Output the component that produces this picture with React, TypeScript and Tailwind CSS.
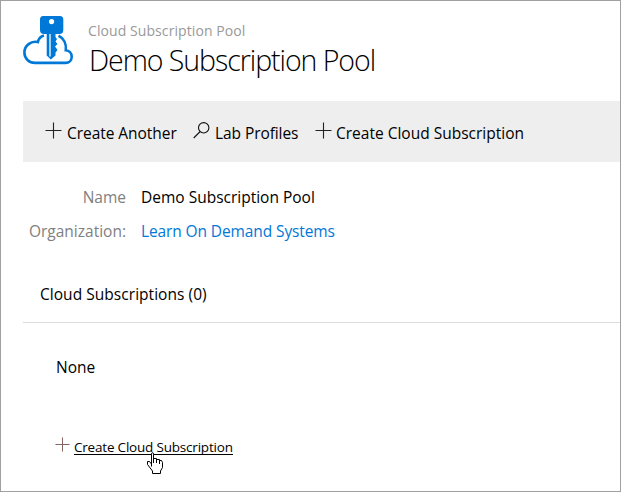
function Plus({ className }: { className: string }) {
  return (
    <svg className={className} viewBox="0 0 17 17" fill="none" stroke="currentColor" strokeWidth="1.100">
      <path d="M0.5 8.5H16.5M8.5 0.5V16.5" />
    </svg>
  );
}

function Logo() {
  return (
    <svg className="block h-[52px] w-[52px] shrink-0" viewBox="0 0 52 52" fill="none">
      <path
        d="M21 19.500C17.800 20.300 15.600 22.800 14.800 26.100C8 24.600 1.400 29.500 1.400 36.500C1.400 42.500 6 46.900 12 46.900H42.500C46.300 46.900 48.700 44 48.700 40.700C48.700 37 46 34.500 42.800 34.300C43.600 27.500 40.500 22 35.500 19.700"
        stroke="#0078d7"
        strokeWidth="2.600"
      />
      <path
        fillRule="evenodd"
        fill="#0078d7"
        d="M20 0H37Q40.300 0 40.300 3.500V14Q40.300 18 36.500 18H21Q17 18 17 14V3.500Q17 0 20 0ZM28.600 3A2.600 2.600 0 1 0 28.600 8.200A2.600 2.600 0 1 0 28.600 3Z"
      />
      <path d="M23.700 17H32.500V21L34 23L32.500 25.500L34.500 28L32 30.500L34.500 34L32.500 36.500V39.500L27.800 43.500L23.700 39.500Z" fill="#0078d7" />
      <path d="M27 18V40.500" stroke="white" strokeWidth="1.300" />
    </svg>
  );
}

function Hand() {
  return (
    <svg className="absolute left-[72px] top-[15px] h-[23px] w-[18px]" viewBox="0 0 18 23">
      <path
        d="M5.500 14.500V2.500Q5.500 0.500 6.500 0.500Q7.500 0.500 7.500 2.500V6.500H10.500V7.500H13.500V8.500H15.500L16.500 10.500V15.500L14.500 19V21.500H6.500V19L1.500 12.500V9.500H3.500L5.500 12"
        fill="white"
        stroke="black"
      />
      <path d="M7.500 6V11M10.500 7V11M13.500 8V12" stroke="black" />
    </svg>
  );
}

export default function App() {
  return (
    <div className="h-[492px] w-[621px] overflow-hidden border border-[#a0a0a0] bg-white font-['Open_Sans','Noto_Sans',sans-serif] text-[15.5px] leading-[22px] whitespace-nowrap text-black">
      <header className="flex h-[100px] pl-[22px] pt-[15px]">
        <Logo />
        <div className="ml-[13px]">
          <p className="h-[20px] text-[14px] leading-[29px] tracking-[0.08px] text-[#999]">Cloud Subscription Pool</p>
          <h1 className="ml-px mt-[3px] text-[28.5px] leading-[42px] font-light tracking-[-1.050px]">Demo Subscription Pool</h1>
        </div>
      </header>
      <nav className="ml-[22px] flex h-[61px] items-center bg-[#eee] pl-[22px] pt-[3px]">
        <div className="flex w-[148px]">
          <Plus className="mr-[4px] h-[17px] w-[17px] shrink-0 text-[#222]" />
          <span className="ml-px tracking-[-0.050px]">Create Another</span>
        </div>
        <div className="flex w-[122px]">
          <svg className="mr-[4px] h-[17px] w-[17px] shrink-0" viewBox="0 0 17 17" fill="none" stroke="#111" strokeWidth="1.100">
            <circle cx="10.700" cy="5.800" r="5.200" />
            <path d="M7.200 9.500L0.700 16" />
          </svg>
          <span className="ml-px tracking-[-0.080px]">Lab Profiles</span>
        </div>
        <div className="flex">
          <Plus className="mr-[4px] h-[17px] w-[17px] shrink-0 text-[#222]" />
          <span>Create Cloud Subscription</span>
        </div>
      </nav>
      <dl className="grid h-[110px] grid-cols-[125px_1fr] grid-rows-[34px_34px] gap-x-[15px] pt-[24px]">
        <dt className="text-right text-[#808080]">Name</dt>
        <dd>Demo Subscription Pool</dd>
        <dt className="text-right text-[#808080]">Organization:</dt>
        <dd className="tracking-[-0.110px] text-[#0078d7]">Learn On Demand Systems</dd>
      </dl>
      <h2 className="ml-[22px] h-[51px] border-b border-[#dcdcdc] pl-[17px] pt-[11px] tracking-[0.040px]">Cloud Subscriptions (0)</h2>
      <p className="ml-[55px] mt-[33px]">None</p>
      <div className="relative ml-[54px] mt-[59px] flex text-[13.500px] leading-[20px] tracking-[-0.200px]">
        <Plus className="mr-[4px] h-[15px] w-[15px] shrink-0 text-[#865e5e]" />
        <div className="relative">
          <span className="block h-[18px] border-b border-black">Create Cloud Subscription</span>
          <Hand />
        </div>
      </div>
    </div>
  );
}
